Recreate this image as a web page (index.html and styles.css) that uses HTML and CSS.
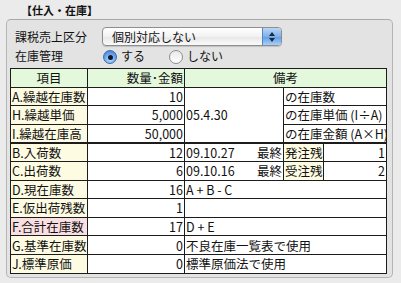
FILE: index.html
```html
<!DOCTYPE html>
<html lang="ja">
<head>
    <meta charset="UTF-8">
    <title>仕入・在庫</title>
    <link rel="stylesheet" href="styles.css">
</head>
<body>
    <div class="title">【仕入・在庫】</div>

    <div class="group">
        <div class="form-row">
            <span class="label">課税売上区分</span>
            <div class="popup">
                <span class="popup-text">個別対応しない</span>
                <span class="popup-arrows">
                    <svg width="8" height="12" viewBox="0 0 8 12">
                        <path d="M4 1 L7 5 L1 5 Z" fill="#1a2a40"/>
                        <path d="M4 11 L7 7 L1 7 Z" fill="#1a2a40"/>
                    </svg>
                </span>
            </div>
        </div>
        <div class="form-row radio-row">
            <span class="label">在庫管理</span>
            <span class="radio checked"></span>
            <span class="radio-text">する</span>
            <span class="radio"></span>
            <span class="radio-text">しない</span>
        </div>

        <table class="stock-table">
            <colgroup>
                <col class="c-item">
                <col class="c-qty">
                <col class="c-note">
                <col class="c-sub">
                <col class="c-val">
            </colgroup>
            <tr class="head">
                <td class="center">項目</td>
                <td class="num">数量･金額</td>
                <td class="center" colspan="3">備考</td>
            </tr>
            <tr>
                <td class="item">A.繰越在庫数</td>
                <td class="num">10</td>
                <td rowspan="3">05.4.30</td>
                <td colspan="2">の在庫数</td>
            </tr>
            <tr>
                <td class="item">H.繰越単価</td>
                <td class="num">5,000</td>
                <td colspan="2">の在庫単価 (I÷A)</td>
            </tr>
            <tr>
                <td class="item">I.繰越在庫高</td>
                <td class="num">50,000</td>
                <td colspan="2">の在庫金額 (A×H)</td>
            </tr>
            <tr class="split">
                <td class="item">B.入荷数</td>
                <td class="num">12</td>
                <td><div class="date-cell"><span>09.10.27</span><span>最終</span></div></td>
                <td class="item">発注残</td>
                <td class="num">1</td>
            </tr>
            <tr>
                <td class="item">C.出荷数</td>
                <td class="num">6</td>
                <td><div class="date-cell"><span>09.10.16</span><span>最終</span></div></td>
                <td class="item">受注残</td>
                <td class="num">2</td>
            </tr>
            <tr>
                <td class="item">D.現在庫数</td>
                <td class="num">16</td>
                <td colspan="3">A + B - C</td>
            </tr>
            <tr>
                <td class="item">E.仮出荷残数</td>
                <td class="num">1</td>
                <td colspan="3"></td>
            </tr>
            <tr>
                <td class="item total">F.合計在庫数</td>
                <td class="num">17</td>
                <td colspan="3">D + E</td>
            </tr>
            <tr>
                <td class="item">G.基準在庫数</td>
                <td class="num">0</td>
                <td colspan="3">不良在庫一覧表で使用</td>
            </tr>
            <tr>
                <td class="item">J.標準原価</td>
                <td class="num">0</td>
                <td colspan="3">標準原価法で使用</td>
            </tr>
        </table>
    </div>
</body>
</html>
```

FILE: styles.css
```css
:root {
    --page-bg: #ebebeb;
    --box-bg: #e3e3e3;
    --box-border: #b4b4b4;
    --line: #1c1c1c;
    --head-bg: #e4f8dc;
    --item-bg: #fdfbe2;
    --total-bg: #f9dfe2;
}

* {
    margin: 0;
    padding: 0;
    box-sizing: border-box;
}

body {
    font-family: "Noto Sans CJK JP", "Noto Sans", sans-serif;
    color: #111;
    background-color: var(--page-bg);
    width: 401px;
    height: 283px;
    overflow: hidden;
}

.title {
    height: 19px;
    padding: 4px 0 0 21px;
    font-size: 11px;
    line-height: 13px;
    font-weight: bold;
}

.group {
    margin: 0 8px 0 6px;
    border: 1px solid var(--box-border);
    border-top-color: #a8a8a8;
    border-radius: 5px;
    background-color: var(--box-bg);
    padding: 7px 6px 3px 3px;
}

.form-row {
    display: flex;
    align-items: center;
    height: 19px;
}

.radio-row {
    height: 16px;
    margin-top: 2px;
}

.label {
    width: 92px;
    padding-left: 5px;
    font-size: 12px;
    line-height: 14px;
}

.popup {
    display: flex;
    width: 180px;
    height: 19px;
    border: 1px solid #8e8e8e;
    border-radius: 4px;
    background: linear-gradient(#ffffff, #f2f2f2 50%, #e6e6e6 51%, #fafafa);
    overflow: hidden;
    box-shadow: 0 1px 1px rgba(0, 0, 0, 0.15);
}

.popup-text {
    flex: 1;
    padding-left: 9px;
    font-size: 12px;
    line-height: 17px;
}

.popup-arrows {
    width: 19px;
    display: flex;
    align-items: center;
    justify-content: center;
    border-left: 1px solid #5b84b8;
    background: linear-gradient(#b9d6f6, #7fb0ec 50%, #5d9be6 51%, #a7d0fb);
}

.radio {
    width: 14px;
    height: 14px;
    border-radius: 50%;
    border: 1px solid #8d8d8d;
    background: linear-gradient(#e9e9e9, #ffffff);
    margin: 2px 0 0 1px;
    position: relative;
}

.radio.checked {
    border-color: #3f6da8;
    background: radial-gradient(circle at 50% 70%, #bfe0ff, #5d9ce8 60%, #3a78cf);
}

.radio.checked::after {
    content: "";
    position: absolute;
    left: 3.5px;
    top: 3.5px;
    width: 5px;
    height: 5px;
    border-radius: 50%;
    background-color: #111a2a;
}

.radio-text {
    font-size: 12px;
    line-height: 14px;
    margin: 0 23px 0 4px;
}

.stock-table {
    margin-top: 4px;
    width: 376px;
    table-layout: fixed;
    border-collapse: collapse;
    background-color: #fff;
    font-size: 12.5px;
}

.c-item { width: 77px; }
.c-qty  { width: 97px; }
.c-note { width: 99px; }
.c-sub  { width: 40px; }
.c-val  { width: 63px; }

.stock-table td {
    border: 1px solid var(--line);
    height: 18.6px;
    padding: 0 1px;
    line-height: 17px;
    white-space: nowrap;
    overflow: hidden;
}

.stock-table .head td {
    background-color: var(--head-bg);
}

.stock-table .split td {
    border-top-width: 2px;
}

.stock-table .center {
    text-align: center;
}

.stock-table .num {
    text-align: right;
}

.stock-table .item {
    background-color: var(--item-bg);
}

.stock-table .total {
    background-color: var(--total-bg);
}

.date-cell {
    display: flex;
    justify-content: space-between;
}
```
